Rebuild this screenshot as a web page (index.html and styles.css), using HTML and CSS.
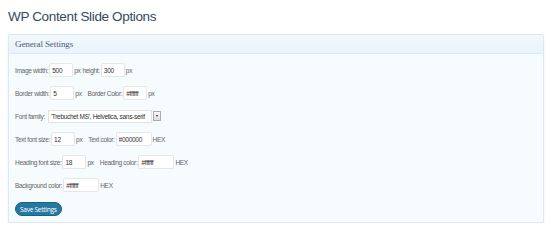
FILE: index.html
```html
<!DOCTYPE html>
<html lang="en">
<head>
  <meta charset="UTF-8">
  <title>WP Content Slide Options</title>
  <link rel="stylesheet" href="styles.css">
</head>
<body>
  <div class="wrap">
    <h2>WP Content Slide Options</h2>

    <div class="postbox">
      <h3>General Settings</h3>
      <div class="inside">
        <div class="row">
          <label>Image width:</label> <input class="small" value="500"> <span>px</span>
          <label class="gap">height:</label> <input class="small" value="300"> <span>px</span>
        </div>
        <div class="row">
          <label>Border width:</label> <input class="small" value="5"> <span>px</span>
          <label class="gap2">Border Color:</label> <input class="small" value="#ffffff"> <span>px</span>
        </div>
        <div class="row">
          <label>Font family:</label>
          <div class="select">
            <span class="select-text">'Trebuchet MS', Helvetica, sans-serif</span>
            <span class="select-btn"></span>
          </div>
        </div>
        <div class="row">
          <label>Text font size:</label> <input class="small" value="12"> <span>px</span>
          <label class="gap2">Text color:</label> <input class="medium" value="#000000"> <span>HEX</span>
        </div>
        <div class="row">
          <label>Heading font size:</label> <input class="small" value="18"> <span>px</span>
          <label class="gap2">Heading color:</label> <input class="medium" value="#ffffff"> <span>HEX</span>
        </div>
        <div class="row">
          <label>Background color:</label> <input class="medium" value="#ffffff"> <span>HEX</span>
        </div>
        <div class="actions">
          <button class="button-primary">Save Settings</button>
        </div>
      </div>
    </div>
  </div>
</body>
</html>
```

FILE: styles.css
```css
* { margin: 0; padding: 0; box-sizing: border-box; }
body { font-family: "Liberation Sans", Arial, sans-serif; background: white; color: #555; }

.wrap { padding: 9px 6px 0 8px; }

h2 {
  font-size: 13.5px;
  font-weight: normal;
  color: #34495e;
  height: 25px;
  line-height: 16px;
  letter-spacing: -0.35px;
}

.postbox {
  border: 1px solid #dce8f3;
  background: #f6fbfe;
  border-radius: 2px;
  box-shadow: 0 1px 2px rgba(180, 200, 220, 0.3);
}

.postbox h3 {
  font-family: "Liberation Serif", Georgia, serif;
  font-size: 9px;
  font-weight: normal;
  color: #4a5d74;
  height: 19px;
  line-height: 19px;
  padding-left: 6px;
  letter-spacing: -0.1px;
  background: linear-gradient(#f2f8fd, #eaf3fb);
  border-bottom: 1px solid #dde9f4;
}

.inside { padding: 9px 6px 6px 6px; }

.row {
  display: flex;
  align-items: center;
  height: 14px;
  margin-bottom: 9px;
  font-size: 6.6px;
  color: #666;
  letter-spacing: -0.35px;
  white-space: nowrap;
}

.row label { margin-right: 1px; }
.row span { margin-left: 1px; }
.row .gap { margin-left: 2px; }
.row .gap2 { margin-left: 6px; }

input {
  font-family: inherit;
  font-size: 6.6px;
  letter-spacing: -0.3px;
  height: 14px;
  border: 1px solid #e6e6e6;
  border-radius: 2px;
  background: white;
  color: #333;
  padding: 0 2px;
}

input.small { width: 24px; }
input.medium { width: 36px; }

.select {
  display: flex;
  align-items: center;
  height: 13px;
  margin-left: 1px;
}

.select-text {
  display: block;
  width: 104px;
  height: 13px;
  line-height: 11px;
  border: 1px solid #e2e2e2;
  background: white;
  color: #333;
  padding-left: 2px;
  margin-left: 0;
  overflow: hidden;
}

.select-btn {
  display: block;
  width: 8px;
  height: 10px;
  margin-left: 1px;
  border: 1px solid #aaa;
  background: linear-gradient(#fafafa, #ddd);
  position: relative;
}

.select-btn::after {
  content: "";
  position: absolute;
  left: 2px;
  top: 3px;
  border-left: 1.5px solid transparent;
  border-right: 1.5px solid transparent;
  border-top: 2px solid #222;
}

.actions { display: flex; padding-top: 1px; }

.button-primary {
  font-family: "Open Sans", "Liberation Sans", sans-serif;
  font-size: 6.6px;
  color: white;
  background: #2379a2;
  border: 1px solid #1b6184;
  border-radius: 7px;
  height: 14px;
  padding: 0 4px;
  letter-spacing: -0.3px;
}
```
